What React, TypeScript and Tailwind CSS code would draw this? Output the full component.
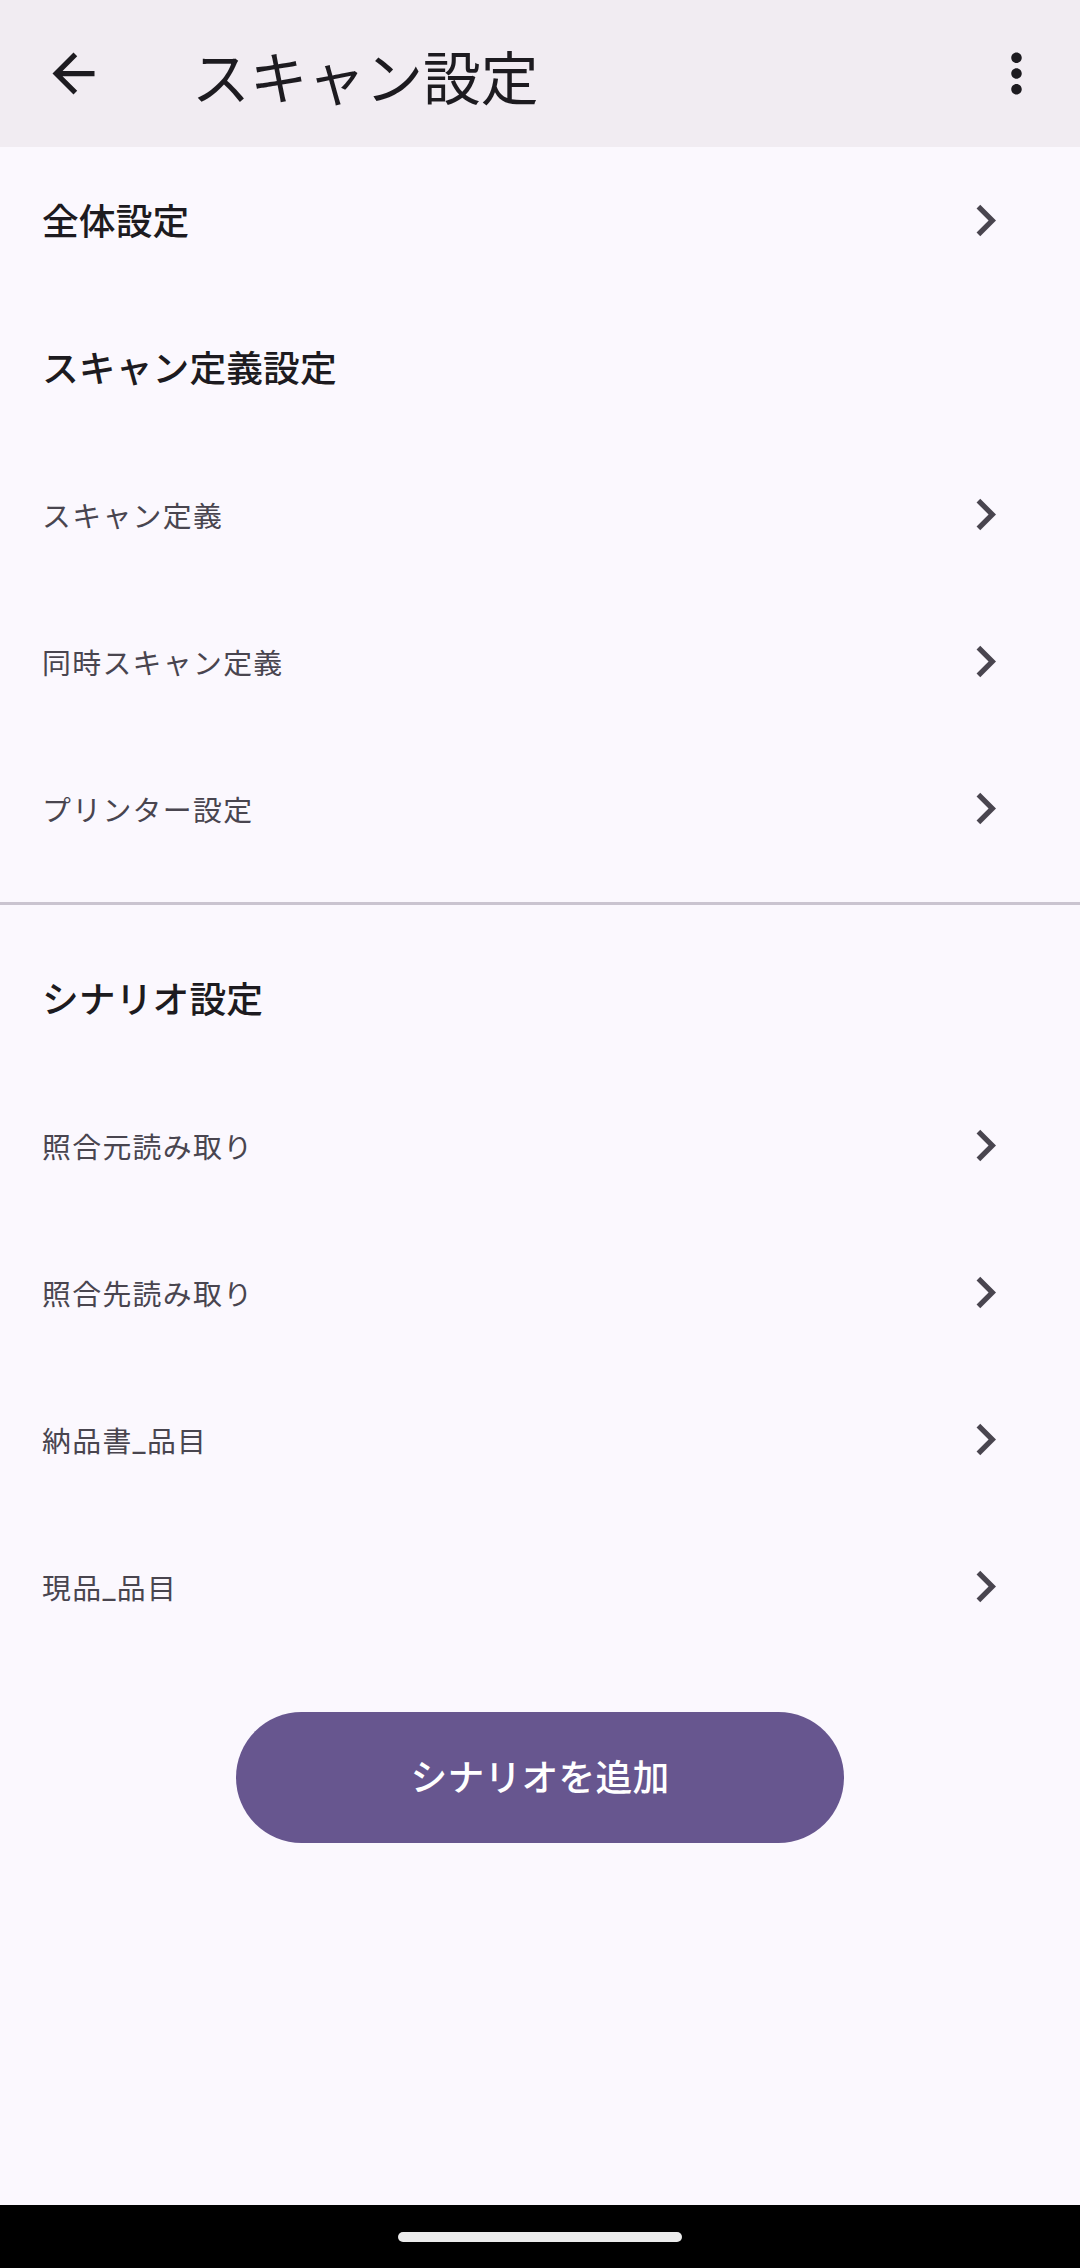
import React from "react";

const FONT = { fontFamily: 'Roboto, "Noto Sans CJK JP", sans-serif' };

function Chevron() {
  return (
    <svg viewBox="0 0 24 24" className="w-[63px] h-[63px] shrink-0" fill="#49454f">
      <path d="M10 6L8.59 7.41 13.17 12l-4.58 4.59L10 18l6-6z" />
    </svg>
  );
}

function Heading({ text, chevron = false }: { text: string; chevron?: boolean }) {
  return (
    <div className="h-[147px] flex items-center justify-between pl-[42px] pr-[63px]">
      <span className="pt-[5px] text-[36.75px] font-medium text-[#1d1b20] tracking-[0.1px] leading-none">{text}</span>
      {chevron && <Chevron />}
    </div>
  );
}

function Item({ text }: { text: string }) {
  return (
    <div className="h-[147px] flex items-center justify-between pl-[42px] pr-[63px]">
      <span className="pt-[6px] text-[28.9px] font-normal text-[#49454f] tracking-[1.3px] leading-none">{text}</span>
      <Chevron />
    </div>
  );
}

export default function App() {
  return (
    <div className="w-[1080px] h-[2268px] bg-[#fbf8fe] flex flex-col" style={FONT}>
      <div className="h-[147px] bg-[#f1ecf2] flex items-center shrink-0">
        <div className="w-[63px] h-[63px] ml-[42px] flex items-center justify-center">
          <svg viewBox="0 0 24 24" className="w-[63px] h-[63px]" fill="#1d1b20">
            <path d="M20 11H7.83l5.59-5.59L12 4l-8 8 8 8 1.41-1.41L7.83 13H20v-2z" />
          </svg>
        </div>
        <span className="ml-[87px] pt-[14px] text-[57.75px] font-normal text-[#1d1b20] leading-none">スキャン設定</span>
        <div className="ml-auto mr-[32px] w-[63px] h-[63px]">
          <svg viewBox="0 0 24 24" className="w-[63px] h-[63px]" fill="#1d1b20">
            <path d="M12 8c1.1 0 2-.9 2-2s-.9-2-2-2-2 .9-2 2 .9 2 2 2zm0 2c-1.1 0-2 .9-2 2s.9 2 2 2 2-.9 2-2-.9-2-2-2zm0 6c-1.1 0-2 .9-2 2s.9 2 2 2 2-.9 2-2-.9-2-2-2z" />
          </svg>
        </div>
      </div>

      <div className="flex flex-col flex-1">
        <Heading text="全体設定" chevron />
        <Heading text="スキャン定義設定" />
        <Item text="スキャン定義" />
        <Item text="同時スキャン定義" />
        <Item text="プリンター設定" />
        <div className="mt-[20px] mb-[20px] h-[3px] bg-[#cac4d0]" />
        <Heading text="シナリオ設定" />
        <Item text="照合元読み取り" />
        <Item text="照合先読み取り" />
        <Item text="納品書_品目" />
        <Item text="現品_品目" />
        <div className="flex justify-center mt-[52px]">
          <button className="w-[608px] h-[131px] rounded-full bg-[#67568f] text-white text-[36.75px] font-medium tracking-[0.26px] leading-none flex items-center justify-center pt-[4px]">
            シナリオを追加
          </button>
        </div>
      </div>

      <div className="h-[63px] bg-black flex items-center justify-center shrink-0">
        <div className="w-[284px] h-[10px] rounded-full bg-[#ebebeb]" />
      </div>
    </div>
  );
}
